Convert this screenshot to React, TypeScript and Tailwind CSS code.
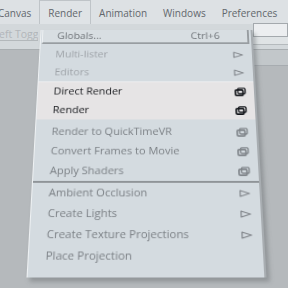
const menuFont = "font-['Open_Sans',sans-serif]";

function OptionBox({ dark }: { dark?: boolean }) {
  const c = dark ? "#111318" : "#7f8489";
  return (
    <svg width="12" height="10" viewBox="0 0 12 10">
      <rect x="3.5" y="0.8" width="7.5" height="6.2" rx="1.2" fill="none" stroke={c} strokeWidth="1.3" />
      <rect x="0.9" y="2.9" width="7.8" height="6.2" rx="1.2" fill="none" stroke={c} strokeWidth="1.7" />
    </svg>
  );
}

function SubArrow() {
  return (
    <svg width="11" height="8" viewBox="0 0 11 8">
      <path d="M1 1 L10 4 L1 7 Z" fill="none" stroke="#80858a" strokeWidth="1.2" strokeLinejoin="round" />
    </svg>
  );
}

type Item = { label: string; kind: "arrow" | "box"; tone: "dim" | "mid" | "dark" };

const upper: Item[] = [
  { label: "Multi-lister", kind: "arrow", tone: "dim" },
  { label: "Editors", kind: "arrow", tone: "dim" },
];

const active: Item[] = [
  { label: "Direct Render", kind: "box", tone: "dark" },
  { label: "Render", kind: "box", tone: "dark" },
];

const output: Item[] = [
  { label: "Render to QuickTimeVR", kind: "box", tone: "mid" },
  { label: "Convert Frames to Movie", kind: "box", tone: "mid" },
  { label: "Apply Shaders", kind: "box", tone: "mid" },
];

const lower: Item[] = [
  { label: "Ambient Occlusion", kind: "arrow", tone: "mid" },
  { label: "Create Lights", kind: "arrow", tone: "mid" },
  { label: "Create Texture Projections", kind: "arrow", tone: "mid" },
];

function MenuRow({ item }: { item: Item }) {
  const color =
    item.tone === "dark" ? "text-[#15171b]" : item.tone === "dim" ? "text-[#9ea3a8]" : "text-[#7c8186]";
  return (
    <div className={`h-[21px] flex items-center justify-between pl-4 text-[11px] ${color} ${item.kind === "arrow" ? "pr-[9px]" : "pr-[8px]"}`}>
      <span>{item.label}</span>
      {item.kind === "arrow" ? <SubArrow /> : <OptionBox dark={item.tone === "dark"} />}
    </div>
  );
}

export default function App() {
  const bar = ["Canvas", "Render", "Animation", "Windows", "Preferences"];
  return (
    <div className={`relative w-[288px] h-[288px] overflow-hidden bg-[#b5b9bc] ${menuFont}`}>
      {/* menu bar */}
      <div className="h-[24px] bg-[#dde1e4] flex items-end -ml-[10px] text-[10px] text-[#62676c]">
        {bar.map((b) => (
          <div
            key={b}
            className={`px-2 h-[21px] flex items-center whitespace-nowrap ${
              b === "Render" ? "bg-[#dfe3e6] border-x border-t border-[#bfc4c8] h-[24px] pt-[1px]" : ""
            }`}
          >
            {b}
          </div>
        ))}
      </div>

      {/* toolbar strip */}
      <div className="h-[26px] bg-[#d3d8db] flex items-start justify-between border-b border-[#a9aeb1]">
        <div className="mt-[3px] w-[38px] h-[14px] border-b border-[#b3b8bb] text-[10.5px] leading-[14px] text-[#b2b6ba] overflow-hidden whitespace-nowrap pl-[1px] -indent-[2px]">
          eft Togg
        </div>
        <div className="-mt-[1px] w-[35px] flex flex-col">
          <div className="h-[14px] bg-[#eceef0] border border-[#a4a9ad]" />
          <div className="h-[8px] border-b border-[#b5babd] bg-[#dfe3e5]" />
        </div>
      </div>
      <div className="flex justify-end">
        <div className="w-[35px] h-[16px] bg-[#c2c7ca] border-b border-[#a7acb0]" />
      </div>

      {/* dropdown */}
      <div className="absolute left-[34px] top-[13px] w-[225px] [transform:perspective(800px)_rotateX(22deg)] bg-[#d4dbe0] border-l border-l-[#eef1f3] border-r-2 border-r-[#a8adb1] shadow-[3px_4px_4px_rgba(80,85,90,0.35)]">
        <div className="h-[17px] ml-[1px] mr-[2px] flex items-center justify-between pl-[15px] pr-[29px] text-[11px] text-[#70757a] bg-[#d8dee2] border-l border-l-[#eef1f3] border-r-2 border-b-2 border-[#989da1]">
          <span>Globals...</span>
          <span>Ctrl+6</span>
        </div>
        <div className="h-[2px]" />
        {upper.map((i) => (
          <MenuRow key={i.label} item={i} />
        ))}
        <div className="h-[1px] bg-[#f0f1f2]" />
        <div className="bg-[#e6e4e5]">
          {active.map((i) => (
            <MenuRow key={i.label} item={i} />
          ))}
        </div>
        <div className="h-[3px]" />
        {output.map((i) => (
          <MenuRow key={i.label} item={i} />
        ))}
        <div className="h-[2px] bg-[#8f9498]" />
        {lower.map((i) => (
          <MenuRow key={i.label} item={i} />
        ))}
        <div className="h-[21px] flex items-center pl-4 text-[11px] text-[#7c8186]">Place Projection</div>
        <div className="h-[10px]" />
      </div>
    </div>
  );
}
